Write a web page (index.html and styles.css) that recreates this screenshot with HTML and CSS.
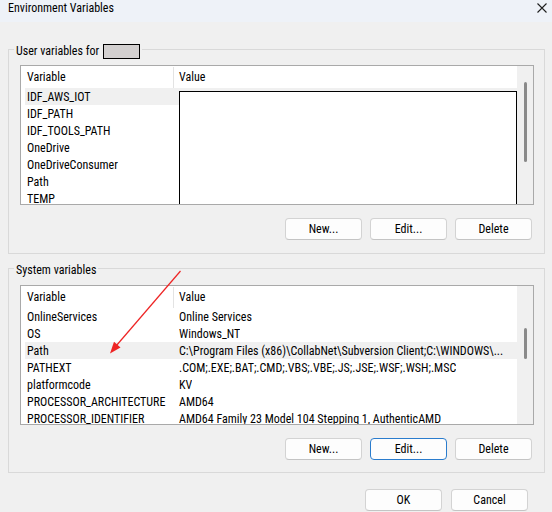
FILE: index.html
```html
<!DOCTYPE html>
<html>
<head>
<meta charset="utf-8">
<title>Environment Variables</title>
<link rel="stylesheet" href="styles.css">
</head>
<body>
<div class="titlebar">
  <span class="title">Environment Variables</span>
  <svg class="close" width="10" height="10" viewBox="0 0 10 10"><path d="M0.5 0.5 L9.5 9.5 M9.5 0.5 L0.5 9.5" stroke="#1f1f1f" stroke-width="1.1" fill="none"/></svg>
</div>

<fieldset class="group group-user">
  <legend><span>User variables for</span><span class="redact"></span></legend>
  <div class="list">
    <div class="list-main">
      <div class="list-head"><div class="col-var">Variable</div><div class="col-val">Value</div></div>
      <div class="row selected"><div class="c1">IDF_AWS_IOT</div><div class="c2"></div></div>
      <div class="row"><div class="c1">IDF_PATH</div><div class="c2"></div></div>
      <div class="row"><div class="c1">IDF_TOOLS_PATH</div><div class="c2"></div></div>
      <div class="row"><div class="c1">OneDrive</div><div class="c2"></div></div>
      <div class="row"><div class="c1">OneDriveConsumer</div><div class="c2"></div></div>
      <div class="row"><div class="c1">Path</div><div class="c2"></div></div>
      <div class="row"><div class="c1">TEMP</div><div class="c2"></div></div>
    </div>
    <div class="scrollbar"><div class="thumb thumb-user"></div></div>
    <div class="redact-box"></div>
  </div>
  <div class="btn-row">
    <button class="btn">New...</button>
    <button class="btn">Edit...</button>
    <button class="btn">Delete</button>
  </div>
</fieldset>

<fieldset class="group group-sys">
  <legend><span>System variables</span></legend>
  <div class="list">
    <div class="list-main">
      <div class="list-head"><div class="col-var">Variable</div><div class="col-val">Value</div></div>
      <div class="row"><div class="c1">OnlineServices</div><div class="c2">Online Services</div></div>
      <div class="row"><div class="c1">OS</div><div class="c2">Windows_NT</div></div>
      <div class="row selected"><div class="c1">Path</div><div class="c2">C:\Program Files (x86)\CollabNet\Subversion Client;C:\WINDOWS\...</div></div>
      <div class="row"><div class="c1">PATHEXT</div><div class="c2">.COM;.EXE;.BAT;.CMD;.VBS;.VBE;.JS;.JSE;.WSF;.WSH;.MSC</div></div>
      <div class="row"><div class="c1">platformcode</div><div class="c2">KV</div></div>
      <div class="row"><div class="c1">PROCESSOR_ARCHITECTURE</div><div class="c2">AMD64</div></div>
      <div class="row"><div class="c1">PROCESSOR_IDENTIFIER</div><div class="c2">AMD64 Family 23 Model 104 Stepping 1, AuthenticAMD</div></div>
    </div>
    <div class="scrollbar"><div class="thumb thumb-sys"></div></div>
  </div>
  <div class="btn-row">
    <button class="btn">New...</button>
    <button class="btn btn-focus">Edit...</button>
    <button class="btn">Delete</button>
  </div>
</fieldset>

<div class="dialog-buttons">
  <button class="btn">OK</button>
  <button class="btn">Cancel</button>
</div>

<svg class="arrow" width="552" height="512" viewBox="0 0 552 512">
  <line x1="180.5" y1="271" x2="116" y2="346" stroke="#ee2424" stroke-width="1.2"/>
  <polygon points="110,353.5 120.5,347.5 114,341.8" fill="#ee2424"/>
</svg>
</body>
</html>
```
FILE: styles.css
```css
html, body {
  margin: 0;
  padding: 0;
}

body {
  width: 552px;
  height: 512px;
  overflow: hidden;
  position: relative;
  background: #f0f0f0;
  color: #000;
  font-family: "Roboto Condensed", "Liberation Sans Narrow", "Liberation Sans", sans-serif;
  font-size: 12px;
}

.titlebar {
  height: 22px;
  background: #eef2f8;
  display: flex;
  justify-content: space-between;
  align-items: flex-start;
}

.title {
  padding-left: 8px;
  line-height: 16px;
}

.close {
  margin: 3px 5px 0 0;
}

.group {
  margin: 0 7px 0 8px;
  border: 1px solid #d9d9d9;
  padding: 0 10px 13px 11px;
  min-width: 0;
}

.group-user {
  margin-top: 17px;
}

.group-sys {
  margin-top: 4px;
  padding-bottom: 12px;
}

.group legend {
  display: flex;
  align-items: center;
  gap: 4px;
  padding: 4px 2px 0;
  margin-left: -6px;
  line-height: 16px;
}

.redact {
  display: inline-block;
  width: 37px;
  height: 15px;
  box-sizing: border-box;
  border: 1px solid #000;
  background: #d3d0d0;
}

.list {
  position: relative;
  height: 140px;
  box-sizing: border-box;
  border: 1px solid #a9a9a9;
  background: #fff;
  display: flex;
  overflow: hidden;
  margin-top: 6px;
}

.group-sys .list {
  margin-top: 7px;
}

.list-main {
  flex: 1;
  min-width: 0;
  overflow: hidden;
}

.list-head {
  display: flex;
  height: 21px;
  padding-top: 1px;
  line-height: 21px;
}

.col-var {
  width: 153px;
  box-sizing: border-box;
  padding-left: 6px;
  border-right: 1px solid #e3e3e3;
}

.col-val {
  padding-left: 5px;
}

.row {
  display: flex;
  height: 16px;
  padding-top: 1px;
  line-height: 17px;
  margin-left: 4px;
  white-space: nowrap;
}

.row.selected {
  background: #f0f0f0;
}

.c1 {
  width: 148px;
  flex: none;
  box-sizing: border-box;
  padding-left: 2px;
  overflow: hidden;
}

.c2 {
  padding-left: 6px;
  overflow: hidden;
}

.scrollbar {
  width: 16px;
  flex: none;
  background: #f0f0f0;
}

.thumb {
  width: 3px;
  margin-left: 7px;
  background: #8a8a8a;
  border-radius: 1.5px;
}

.thumb-user {
  margin-top: 16px;
  height: 80px;
}

.thumb-sys {
  margin-top: 42px;
  height: 31px;
}

.redact-box {
  position: absolute;
  left: 158px;
  top: 25px;
  width: 338px;
  height: 114px;
  box-sizing: border-box;
  border: 1px solid #000;
  background: #fff;
}

.btn-row {
  display: flex;
  justify-content: flex-end;
  gap: 8px;
  padding-right: 2px;
  margin-top: 13px;
}

.btn {
  width: 77px;
  height: 22px;
  box-sizing: border-box;
  padding: 0;
  border: 1px solid #d3d3d3;
  border-bottom-color: #c4c4c4;
  border-radius: 4px;
  background: #fdfdfd;
  color: #000;
  font: inherit;
  line-height: 20px;
}

.btn-focus {
  border: 1px solid #2a7ccd;
}

.dialog-buttons {
  display: flex;
  justify-content: flex-end;
  gap: 9px;
  padding-right: 24px;
  margin-top: 16px;
}

.arrow {
  position: absolute;
  left: 0;
  top: 0;
  pointer-events: none;
}
```
